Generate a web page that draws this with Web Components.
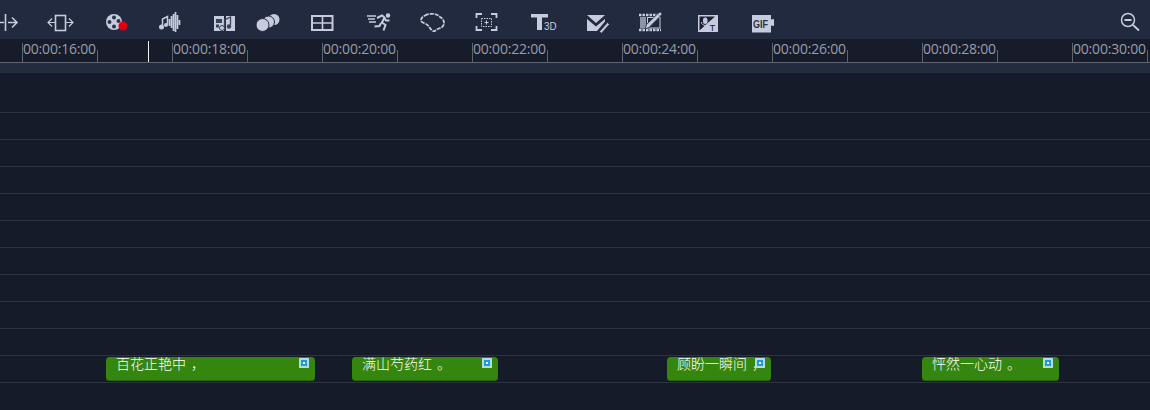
<!DOCTYPE html>
<html>
<head>
<meta charset="utf-8">
<title>Timeline</title>
<style>
  html, body { margin: 0; height: 100%; background: #161b29; overflow: hidden; }
  video-editor { width: 1150px; height: 410px; }
  /* punctuation sits in the middle of its cell in the original font */
  .p { display: inline-block; width: 14px; text-indent: 5px; }
</style>
</head>
<body>
<video-editor>
  <tool-bar slot="toolbar">
    <tool-btn name="split" w="33" x="-3"></tool-btn>
    <tool-btn name="resize" w="55" x="30"></tool-btn>
    <tool-btn name="reel" w="55" x="85"></tool-btn>
    <tool-btn name="wave" w="55" x="140"></tool-btn>
    <tool-btn name="filmnote" w="50" x="195"></tool-btn>
    <tool-btn name="circles" w="50" x="245"></tool-btn>
    <tool-btn name="table" w="55" x="295"></tool-btn>
    <tool-btn name="runner" w="55" x="350"></tool-btn>
    <tool-btn name="lasso" w="55" x="405"></tool-btn>
    <tool-btn name="focus" w="55" x="460"></tool-btn>
    <tool-btn name="text3d" w="55" x="515"></tool-btn>
    <tool-btn name="mailpen" w="55" x="570"></tool-btn>
    <tool-btn name="filmpen" w="55" x="625"></tool-btn>
    <tool-btn name="mictext" w="55" x="680"></tool-btn>
    <tool-btn name="gif" w="55" x="735"></tool-btn>
    <tool-btn name="zoomout" w="40" x="1110" end></tool-btn>
  </tool-bar>
  <time-ruler slot="ruler" labels="00:00:16:00,00:00:18:00,00:00:20:00,00:00:22:00,00:00:24:00,00:00:26:00,00:00:28:00,00:00:30:00" playhead="148"></time-ruler>
  <track-row tall></track-row>
  <track-row></track-row>
  <track-row></track-row>
  <track-row></track-row>
  <track-row></track-row>
  <track-row></track-row>
  <track-row></track-row>
  <track-row></track-row>
  <track-row></track-row>
  <track-row></track-row>
  <track-row>
    <title-clip start="106" length="209">百花正艳中<span class="p">，</span></title-clip>
    <title-clip start="352" length="146">满山芍药红<span class="p">。</span></title-clip>
    <title-clip start="667" length="104">顾盼一瞬间<span class="p">，</span></title-clip>
    <title-clip start="922" length="137">怦然一心动<span class="p">。</span></title-clip>
  </track-row>
</video-editor>

<script>
// icons are drawn in page coordinates, tool-btn shifts the viewBox
const C = '#c6cbdd';
const D = '#222a3f';
const ICONS = {
  split: `<path d="M0 22.5h4M8 22.5h9M12 17.5l5 5-5 5" fill="none" stroke="${C}" stroke-width="1.6"/><path d="M5.5 14v17" stroke="${C}" stroke-width="1.6"/>`,
  resize: `<rect x="55.5" y="15.5" width="10" height="15" fill="none" stroke="${C}" stroke-width="1.6"/><path d="M48 22.5h7M52 18.5l-4 4 4 4M66 22.5h7M69 18.5l4 4-4 4" fill="none" stroke="${C}" stroke-width="1.2"/>`,
  reel: `<circle cx="114" cy="22" r="8" fill="${C}"/><g fill="#2a3348"><circle cx="114" cy="17.5" r="2"/><circle cx="109.5" cy="22" r="2"/><circle cx="118.5" cy="21" r="2"/><circle cx="114" cy="26.5" r="2"/></g><circle cx="123" cy="26" r="4.5" fill="#e0000f"/>`,
  wave: `<path d="M162.5 27V19l5-2.5v8" fill="none" stroke="${C}" stroke-width="1.5"/><circle cx="161.5" cy="27" r="2.5" fill="${C}"/><circle cx="166" cy="25" r="2" fill="${C}"/><path d="M169.5 19v7M171.5 16v12M173.5 14v17M175.5 12v20M177.5 15v14M179.5 20v5" stroke="${C}" stroke-width="1.7"/>`,
  filmnote: `<rect x="214" y="16" width="10" height="15" fill="${C}"/><g fill="#3a4258"><rect x="216" y="19" width="6" height="4"/><rect x="216" y="24.5" width="3" height="3"/></g><rect x="226" y="16" width="9" height="15" fill="${C}"/><path d="M224.5 27v-7l6-3v8" fill="none" stroke="#3a4258" stroke-width="1.3"/><circle cx="222" cy="28" r="2.5" fill="${C}" stroke="#3a4258"/><circle cx="229" cy="26.5" r="2.2" fill="#3a4258"/>`,
  circles: `<circle cx="274" cy="19.5" r="5.5" fill="${C}"/><circle cx="268.5" cy="22" r="6" fill="${C}" stroke="${D}"/><circle cx="262.5" cy="25" r="6.5" fill="${C}" stroke="${D}"/>`,
  table: `<rect x="312" y="16" width="20.5" height="14" fill="none" stroke="${C}" stroke-width="2"/><path d="M312 23h20.5M322.5 16v14" stroke="${C}" stroke-width="1.6"/>`,
  runner: `<circle cx="388" cy="15.5" r="2.2" fill="${C}"/><path d="M367 16h9M368 19h7M369 22h7" stroke="${C}" stroke-width="1.5"/><path d="M377 18l5-2.5 2.5 2-2.5 5 3.5 2.5-2 5.5M381 23l-1.5 3-5 .5M384.5 18l1.5 2.5h3.5" fill="none" stroke="${C}" stroke-width="2"/>`,
  lasso: `<path d="M425 15.5C429 13 437 13 440 17 444 19 445 23 443 26 441 29 437 28 435 31 432 32 430 28 428 25.5 426 23 421 23 421 20.5 421 18 423 16.5 425 15.5z" fill="none" stroke="${C}" stroke-width="1.8" stroke-dasharray="4 1"/>`,
  focus: `<path d="M482 14h-5.5v4M491 14h5.5v4M482 30h-5.5v-4M491 30h5.5v-4" fill="none" stroke="${C}" stroke-width="1.8"/><rect x="481.5" y="18.5" width="10" height="8" fill="none" stroke="${C}" stroke-dasharray="1.5 1"/><path d="M486.5 20.5v4M484.5 22.5h4" stroke="${C}"/>`,
  text3d: `<path d="M531 14h17v3.500h-6v12.500h-5v-12.500h-6z" fill="${C}"/><text x="544" y="30" font-family="Liberation Sans" font-size="11" fill="${C}" textLength="12.5" lengthAdjust="spacingAndGlyphs">3D</text>`,
  mailpen: `<path d="M587 15h18l-9 8z" fill="${C}"/><path d="M587 19l9 7.500 9-7.500v2.500l-8 9.500h-10z" fill="${C}"/><path d="M599.5 31.500l8-9 2 1.800-8 9z" fill="${C}" stroke="${D}" stroke-width=".8"/>`,
  filmpen: `<path d="M639 15h20M639 30h22" stroke="${C}" stroke-width="2.4" stroke-dasharray="2.5 1" fill="none"/><rect x="640" y="17" width="6" height="11.5" fill="#8e94a8"/><rect x="647.5" y="17.5" width="12.5" height="10.5" fill="none" stroke="${C}"/><path d="M645 29l1.500-4.500 11.500-11 2.500 2.500-11.500 11.500z" fill="${C}" stroke="${D}" stroke-width=".8"/><circle cx="660" cy="14" r="1.5" fill="${C}"/>`,
  mictext: `<rect x="698" y="15" width="20" height="17" fill="${C}"/><path d="M699.5 16.5h15.5l-15.5 14z" fill="#1a2132"/><rect x="703" y="17.5" width="4.5" height="6.5" rx="2.2" fill="${C}"/><path d="M701.5 22c0 4.500 7.500 4.500 7.500 0M705.2 26v2.500" fill="none" stroke="${C}"/><text x="709.5" y="30.5" font-family="Liberation Sans" font-size="9.5" fill="#1a2132">T</text>`,
  gif: `<path d="M752 15h19v4.500l3-.5v7l-3-.5v7h-19z" fill="${C}"/><text x="753" y="28" font-family="Liberation Sans" font-size="11.5" font-weight="700" fill="#2a3348" textLength="15" lengthAdjust="spacingAndGlyphs">GIF</text>`,
  zoomout: `<circle cx="1128" cy="20" r="6.5" fill="none" stroke="${C}" stroke-width="1.5"/><path d="M1124.5 20h7" stroke="${C}" stroke-width="2"/><path d="M1133 25l6 5.500" stroke="${C}" stroke-width="1.8"/>`
};

class VideoEditor extends HTMLElement {
  constructor() {
    super();
    this.attachShadow({ mode: 'open' }).innerHTML = `
      <style>
        :host { display: flex; flex-direction: column; background: #161b29; overflow: hidden; }
        .band { height: 10px; background: #232b3e; }
      </style>
      <slot name="toolbar"></slot>
      <slot name="ruler"></slot>
      <div class="band"></div>
      <slot></slot>`;
  }
}

class ToolBar extends HTMLElement {
  constructor() {
    super();
    this.attachShadow({ mode: 'open' }).innerHTML = `
      <style>
        :host { display: flex; height: 39px; background: #222a3f; margin-left: -3px; }
      </style>
      <slot></slot>`;
  }
}

class ToolBtn extends HTMLElement {
  constructor() {
    super();
    this.attachShadow({ mode: 'open' });
  }
  connectedCallback() {
    const w = this.getAttribute('w');
    const x = this.getAttribute('x');
    const name = this.getAttribute('name');
    this.shadowRoot.innerHTML = `
      <style>
        :host { display: block; flex: none; width: ${w}px; height: 39px; }
        :host([end]) { margin-left: auto; }
        svg { display: block; }
      </style>
      <svg width="${w}" height="39" viewBox="${x} 0 ${w} 39">${ICONS[name]}</svg>`;
  }
}

class TimeRuler extends HTMLElement {
  constructor() {
    super();
    this.attachShadow({ mode: 'open' });
  }
  connectedCallback() {
    const labels = this.getAttribute('labels').split(',');
    const cells = labels.map(t => `
      <div class="major"><span>${t}</span><i></i></div>`).join('');
    this.shadowRoot.innerHTML = `
      <style>
        :host { display: block; position: relative; height: 23px; background: #171c2b; border-bottom: 1px solid #5f6470; }
        .row { display: flex; height: 23px; padding-left: 22px; align-items: flex-end; }
        .major { flex: none; width: 150px; height: 19px; box-sizing: border-box; border-left: 1px solid #5f6470; position: relative; }
        span { display: block; font: 14px/16px "Open Sans", sans-serif; color: #989ca8; white-space: nowrap; margin-top: -2px; letter-spacing: -.2px; }
        i { position: absolute; left: 74px; bottom: 0; height: 12px; border-left: 1px solid #5f6470; }
        .head { position: absolute; left: ${this.getAttribute('playhead')}px; top: 2px; bottom: 0; width: 1px; background: #f2f2f2; }
      </style>
      <div class="row">${cells}</div>
      <div class="head"></div>`;
  }
}

class TrackRow extends HTMLElement {
  constructor() {
    super();
    this.attachShadow({ mode: 'open' }).innerHTML = `
      <style>
        :host { display: block; position: relative; height: 26px; border-bottom: 1px solid #2c3240; }
        :host([tall]) { height: 39px; }
      </style>
      <slot></slot>`;
  }
}

class TitleClip extends HTMLElement {
  constructor() {
    super();
    this.attachShadow({ mode: 'open' }).innerHTML = `
      <style>
        :host { display: block; position: absolute; top: 1px; height: 24px; box-sizing: border-box; background: #35860f; border-radius: 4px; padding-left: 10px; color: #fff;
          box-shadow: inset 0 -1px 0 #2a6a0e; }
        .txt { font: 300 14px/13px "Noto Sans CJK SC", sans-serif; white-space: nowrap; }
        .mark { position: absolute; right: 6px; top: 1px; width: 10px; height: 10px; box-sizing: border-box; background: #1e9cd8; border: 2px solid #b5dbe0; display: grid; place-items: center; }
        .mark::after { content: ""; width: 2px; height: 2px; background: #fff; }
      </style>
      <div class="txt"><slot></slot></div>
      <div class="mark"></div>`;
  }
  connectedCallback() {
    this.style.left = this.getAttribute('start') + 'px';
    this.style.width = this.getAttribute('length') + 'px';
  }
}

customElements.define('tool-btn', ToolBtn);
customElements.define('tool-bar', ToolBar);
customElements.define('time-ruler', TimeRuler);
customElements.define('track-row', TrackRow);
customElements.define('title-clip', TitleClip);
customElements.define('video-editor', VideoEditor);
</script>
</body>
</html>
